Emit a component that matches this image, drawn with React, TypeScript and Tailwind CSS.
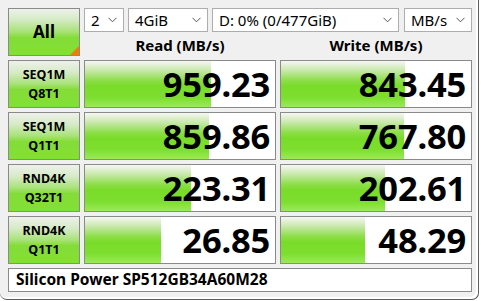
import React from "react";

const FONT = { fontFamily: '"Noto Sans", "Open Sans", "Liberation Sans", sans-serif' };

const barBg =
  "bg-[linear-gradient(to_bottom,#f6f7f4_0%,#c4e8a4_22%,#8ede4a_42%,#78dc28_55%,#7ede30_80%,#9aea58_100%)]";
const labelBg =
  "bg-[linear-gradient(to_bottom,#eef1ec_0%,#d6eac6_25%,#a8e278_50%,#84dc38_62%,#82e034_100%)]";

function Combo({ value, width }: { value: string; width: string }) {
  return (
    <div
      className={`${width} h-6 flex items-center justify-between bg-white border border-[#adadad] pl-[6px] pr-[6px] text-[15px] text-black`}
    >
      <span className="leading-none">{value}</span>
      <svg width="9" height="6" viewBox="0 0 9 6" className="shrink-0">
        <path d="M0.5 0.8 L4.5 4.8 L8.5 0.8" fill="none" stroke="#555" strokeWidth="1" />
      </svg>
    </div>
  );
}

function Label({ top, bottom }: { top: string; bottom: string }) {
  return (
    <div
      className={`h-12 flex flex-col items-center justify-center border border-[#8a8a8a] ${labelBg} text-[12.5px] font-bold text-black leading-[19px]`}
    >
      <span>{top}</span>
      <span>{bottom}</span>
    </div>
  );
}

function Cell({ value, bar }: { value: string; bar: number }) {
  return (
    <div className="relative h-12 flex items-center justify-end border border-[#8a8a8a] bg-white pr-[5px] overflow-hidden">
      <div className={`absolute left-0 top-0 bottom-0 ${barBg}`} style={{ width: bar }} />
      <span className="relative text-[34.5px] font-bold text-black leading-none tracking-[-0.2px]">
        {value}
      </span>
    </div>
  );
}

const rows = [
  { top: "SEQ1M", bottom: "Q8T1", read: "959.23", rb: 126, write: "843.45", wb: 124 },
  { top: "SEQ1M", bottom: "Q1T1", read: "859.86", rb: 124, write: "767.80", wb: 123 },
  { top: "RND4K", bottom: "Q32T1", read: "223.31", rb: 106, write: "202.61", wb: 104 },
  { top: "RND4K", bottom: "Q1T1", read: "26.85", rb: 76, write: "48.29", wb: 84 },
];

export default function App() {
  return (
    <div className="w-[481px] h-[301px] bg-white" style={FONT}>
      <div className="w-[479px] h-[300px] bg-[#f0f0f0] border-r border-b border-[#5e5e5e] rounded-b-[7px] shadow-[inset_-2px_-2px_0_#ffffff] pt-2 pl-2">
        <div className="grid grid-cols-[72px_192px_192px] gap-x-1 gap-y-1 w-[464px]">
          {/* top bar */}
          <div className="relative h-12 flex items-center justify-center border border-[#8a8a8a] bg-[linear-gradient(to_bottom,#eef1ec_0%,#d2eac0_25%,#a6e274_50%,#84dc38_62%,#82e034_100%)] text-[17px] font-bold text-black">
            All
            <div className="absolute right-0 bottom-0 w-0 h-0 border-l-[9px] border-l-transparent border-b-[9px] border-b-[#f07c10]" />
          </div>
          <div className="col-span-2 flex flex-col">
            <div className="flex h-6">
              <Combo value="2" width="w-10" />
              <div className="w-1" />
              <Combo value="4GiB" width="w-20" />
              <div className="w-1" />
              <Combo value="D: 0% (0/477GiB)" width="w-[187px]" />
              <div className="w-[5px]" />
              <Combo value="MB/s" width="w-[68px]" />
            </div>
            <div className="flex h-6 items-center text-[15px] font-bold text-black">
              <div className="w-[192px] text-center pt-[2px]">Read (MB/s)</div>
              <div className="w-1" />
              <div className="w-[192px] text-center pt-[2px]">Write (MB/s)</div>
            </div>
          </div>

          {rows.map((r) => (
            <React.Fragment key={r.top + r.bottom}>
              <Label top={r.top} bottom={r.bottom} />
              <Cell value={r.read} bar={r.rb} />
              <Cell value={r.write} bar={r.wb} />
            </React.Fragment>
          ))}

          <div className="col-span-3 h-6 flex items-center border border-[#8a8a8a] bg-white pl-[7px] text-[15.5px] font-bold text-black">
            Silicon Power SP512GB34A60M28
          </div>
        </div>
      </div>
    </div>
  );
}
